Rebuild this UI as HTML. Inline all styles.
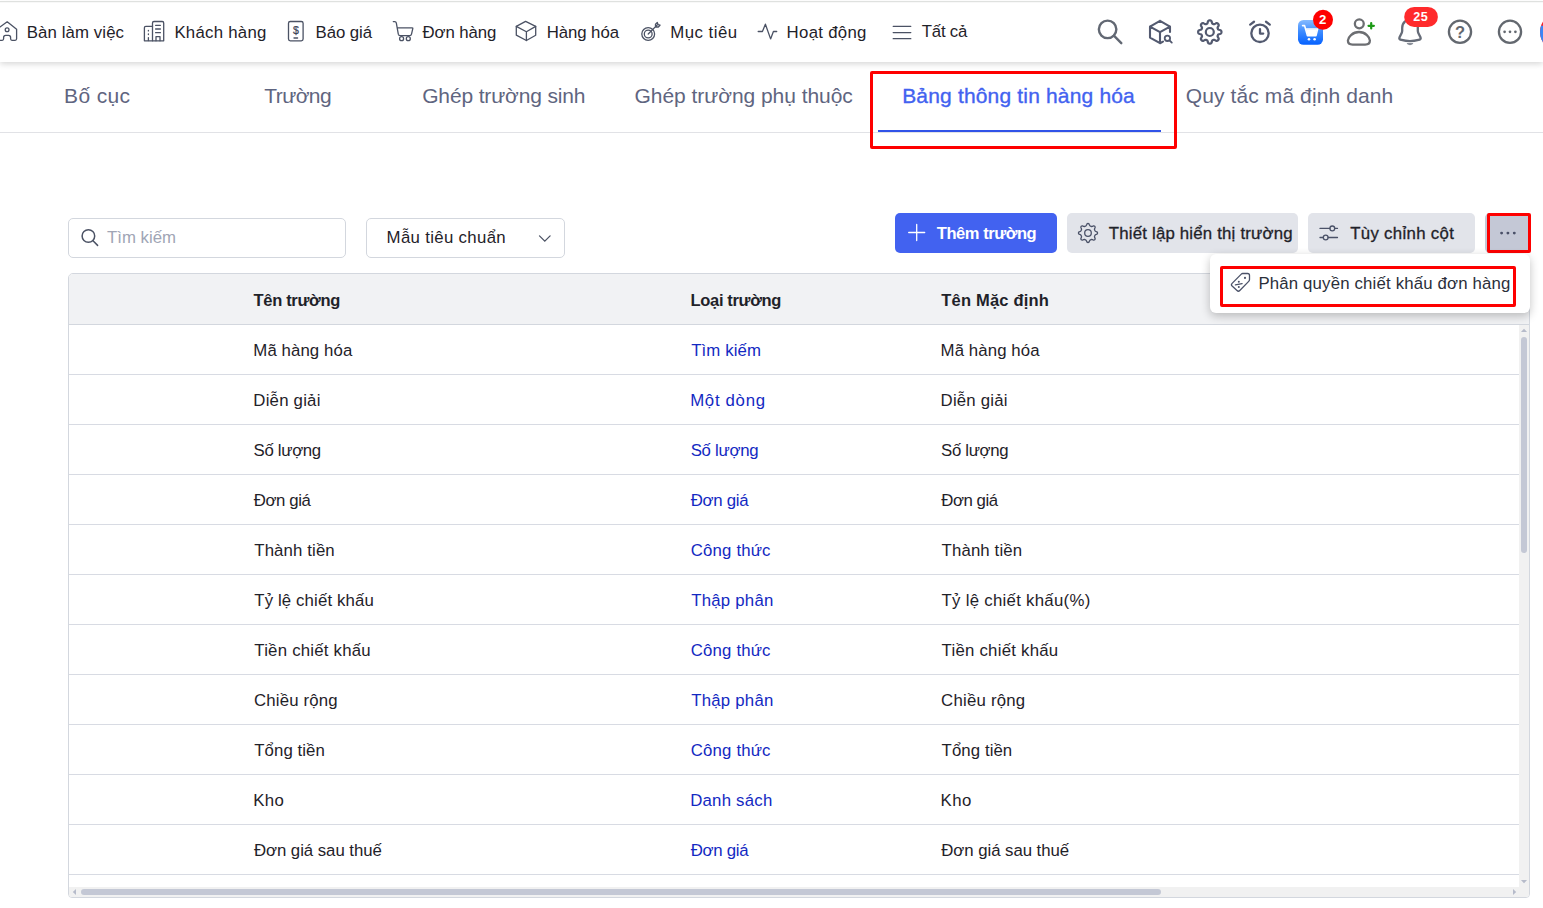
<!DOCTYPE html>
<html lang="vi">
<head>
<meta charset="utf-8">
<title>Bảng thông tin hàng hóa</title>
<style>
*{box-sizing:border-box;margin:0;padding:0}
html,body{width:1543px;height:908px;overflow:hidden;background:#fff}
body{font-family:"Liberation Sans",sans-serif;color:#1f2229;position:relative}
.abs{position:absolute;white-space:nowrap}
svg{display:block;overflow:visible}

/* top nav */
#topline{left:0;top:1px;width:1543px;height:1px;background:#dfe1df;box-shadow:0 1px 0 #f8f8f8}
#nav{left:0;top:3px;width:1543px;height:59px;background:#fff;box-shadow:0 2px 6px rgba(0,0,0,.16)}
.ni{top:23px;font-size:16.8px;line-height:20px;color:#1f2229}
.nic{stroke:#4b5264;fill:none;stroke-width:1.3;stroke-linecap:round;stroke-linejoin:round}
.ric{stroke:#565b66;fill:none;stroke-width:2.3;stroke-linecap:round;stroke-linejoin:round}

/* tabs */
#tabline{left:0;top:132px;width:1543px;height:1px;background:#e1e2e6}
.tab{top:84px;font-size:21px;line-height:24px;color:#5f6580}
.tab.act{color:#4262f0;-webkit-text-stroke:.35px #4262f0}
#tabul{left:878px;top:130px;width:283px;height:2px;background:#3053e8}
.red{border:3px solid #fe0000;background:transparent;border-radius:2px}

/* toolbar */
#search{left:68px;top:218px;width:278px;height:40px;border:1px solid #d3d7de;border-radius:5px;background:#fff}
#search span{position:absolute;top:9px;font-size:16.8px;line-height:20px;color:#a0a5b5}
#select{left:366px;top:218px;width:199px;height:40px;border:1px solid #d3d7de;border-radius:5px;background:#fff}
#select span{position:absolute;top:9px;font-size:16.8px;line-height:20px;color:#1f2229}
.btn{top:213px;height:40px;border-radius:5px;background:#e2e4ea;font-size:16.8px;line-height:20px;color:#1f2229}
.btn span{position:absolute;top:11px;white-space:nowrap;-webkit-text-stroke:.3px #1f2229}
#btnadd span{top:10px;-webkit-text-stroke:0}
#btnadd{left:895px;width:162px;background:#4262f0;color:#fff;font-weight:bold;font-size:16.5px}

/* table */
#tbl{left:68px;top:273px;width:1462px;height:625px;border:1px solid #d3d7de;border-radius:5px 5px 4px 4px;background:#fff;overflow:hidden}
#thead{left:0;top:0;width:1460px;height:51px;background:#f1f2f4;border-bottom:1px solid #d3d7de}
.th{top:16px;font-size:16.5px;line-height:20px;font-weight:bold;color:#1f2229}
.row{left:0;width:1450px;height:50px;border-bottom:1px solid #d8dbe3}
.row span{position:absolute;top:16px;font-size:16.8px;line-height:20px;white-space:nowrap}
.c1{color:#1f2229}
.c2{color:#1329c2}
.c3{color:#1f2229}
#vsb{left:1450px;top:51px;width:10px;height:562px;background:#f1f1f1}
#hsb{left:0;top:613px;width:1460px;height:10px;background:#f1f1f1}
.thumb{background:#c4c8d5;border-radius:3px}

/* popup */
#pop{left:1210px;top:254px;width:320px;height:59px;background:#fff;border-radius:6px;box-shadow:0 3px 10px rgba(0,0,0,.24)}
#pop span{position:absolute;top:20px;font-size:16.8px;line-height:20px;color:#2b2f3a}
</style>
</head>
<body>

<!-- ===== top navigation ===== -->
<div class="abs" id="nav"></div>
<div class="abs" id="topline"></div>

<div class="abs ni" id="n1" style="left:26.7px;letter-spacing:0.11px">Bàn làm việc</div>
<div class="abs ni" id="n2" style="left:174.4px;letter-spacing:0.26px">Khách hàng</div>
<div class="abs ni" id="n3" style="left:315.6px;letter-spacing:-0.07px">Báo giá</div>
<div class="abs ni" id="n4" style="left:422.6px;letter-spacing:-0.09px">Đơn hàng</div>
<div class="abs ni" id="n5" style="left:546.7px;letter-spacing:-0.07px">Hàng hóa</div>
<div class="abs ni" id="n6" style="left:670.2px;letter-spacing:0.50px">Mục tiêu</div>
<div class="abs ni" id="n7" style="left:786.6px;letter-spacing:0.30px">Hoạt động</div>
<div class="abs ni" id="n8" style="left:921.8px;letter-spacing:-0.21px;top:22px">Tất cả</div>

<!-- ===== tabs ===== -->
<div class="abs" id="tabline"></div>
<div class="abs tab" id="b1" style="left:64.1px;letter-spacing:0.35px">Bố cục</div>
<div class="abs tab" id="b2" style="left:264.3px;letter-spacing:-0.58px">Trường</div>
<div class="abs tab" id="b3" style="left:422.2px;letter-spacing:-0.15px">Ghép trường sinh</div>
<div class="abs tab" id="b4" style="left:634.5px;letter-spacing:-0.05px">Ghép trường phụ thuộc</div>
<div class="abs tab act" id="b5" style="left:902.2px;letter-spacing:0.17px">Bảng thông tin hàng hóa</div>
<div class="abs tab" id="b6" style="left:1185.8px;letter-spacing:0.10px">Quy tắc mã định danh</div>
<div class="abs" id="tabul"></div>
<div class="abs red" style="left:870px;top:71px;width:307px;height:78px"></div>

<!-- ===== toolbar ===== -->
<div class="abs" id="search"><span id="s1" style="left:38.0px;letter-spacing:0.01px">Tìm kiếm</span></div>
<div class="abs" id="select"><span id="s2" style="left:19.6px;letter-spacing:0.33px">Mẫu tiêu chuẩn</span></div>

<div class="abs btn" id="btnadd"><span id="s3" style="left:41.8px;letter-spacing:-0.45px">Thêm trường</span></div>
<div class="abs btn" style="left:1067px;width:231px"><span id="s4" style="left:41.8px;letter-spacing:0.20px">Thiết lập hiển thị trường</span></div>
<div class="abs btn" style="left:1308px;width:167px"><span id="s5" style="left:42.2px;letter-spacing:0.32px">Tùy chỉnh cột</span></div>
<div class="abs btn" style="left:1485px;width:45px;background:#c4c8d6"></div>
<div class="abs red" style="left:1487px;top:213px;width:44px;height:40px"></div>

<!-- ===== table ===== -->
<div class="abs" id="tbl">
  <div class="abs" id="thead"></div>
  <div class="abs th" id="h1" style="left:184.6px;letter-spacing:-0.33px">Tên trường</div>
  <div class="abs th" id="h2" style="left:621.6px;letter-spacing:-0.35px">Loại trường</div>
  <div class="abs th" id="h3" style="left:872.3px;letter-spacing:0.19px">Tên Mặc định</div>

  <div class="abs row" style="top:51px"><span class="c1" id="r1c1" style="left:184.3px;letter-spacing:0.10px">Mã hàng hóa</span><span class="c2" id="r1c2" style="left:622.2px;letter-spacing:0.12px">Tìm kiếm</span><span class="c3" id="r1c3" style="left:871.6px;letter-spacing:0.10px">Mã hàng hóa</span></div>
  <div class="abs row" style="top:101px"><span class="c1" id="r2c1" style="left:184.3px;letter-spacing:0.22px">Diễn giải</span><span class="c2" id="r2c2" style="left:621.2px;letter-spacing:0.69px">Một dòng</span><span class="c3" id="r2c3" style="left:871.6px;letter-spacing:0.20px">Diễn giải</span></div>
  <div class="abs row" style="top:151px"><span class="c1" id="r3c1" style="left:184.6px;letter-spacing:-0.32px">Số lượng</span><span class="c2" id="r3c2" style="left:621.7px;letter-spacing:-0.28px">Số lượng</span><span class="c3" id="r3c3" style="left:872.0px;letter-spacing:-0.31px">Số lượng</span></div>
  <div class="abs row" style="top:201px"><span class="c1" id="r4c1" style="left:184.8px;letter-spacing:-0.42px">Đơn giá</span><span class="c2" id="r4c2" style="left:621.7px;letter-spacing:-0.29px">Đơn giá</span><span class="c3" id="r4c3" style="left:872.2px;letter-spacing:-0.43px">Đơn giá</span></div>
  <div class="abs row" style="top:251px"><span class="c1" id="r5c1" style="left:185.3px;letter-spacing:0.12px">Thành tiền</span><span class="c2" id="r5c2" style="left:621.8px;letter-spacing:0.16px">Công thức</span><span class="c3" id="r5c3" style="left:872.6px;letter-spacing:0.13px">Thành tiền</span></div>
  <div class="abs row" style="top:301px"><span class="c1" id="r6c1" style="left:185.3px;letter-spacing:0.13px">Tỷ lệ chiết khấu</span><span class="c2" id="r6c2" style="left:622.2px;letter-spacing:0.23px">Thập phân</span><span class="c3" id="r6c3" style="left:872.6px;letter-spacing:0.28px">Tỷ lệ chiết khấu(%)</span></div>
  <div class="abs row" style="top:351px"><span class="c1" id="r7c1" style="left:185.3px;letter-spacing:0.23px">Tiền chiết khấu</span><span class="c2" id="r7c2" style="left:621.8px;letter-spacing:0.16px">Công thức</span><span class="c3" id="r7c3" style="left:872.6px;letter-spacing:0.24px">Tiền chiết khấu</span></div>
  <div class="abs row" style="top:401px"><span class="c1" id="r8c1" style="left:184.9px;letter-spacing:0.19px">Chiều rộng</span><span class="c2" id="r8c2" style="left:622.2px;letter-spacing:0.23px">Thập phân</span><span class="c3" id="r8c3" style="left:872.1px;letter-spacing:0.22px">Chiều rộng</span></div>
  <div class="abs row" style="top:451px"><span class="c1" id="r9c1" style="left:185.3px;letter-spacing:0.07px">Tổng tiền</span><span class="c2" id="r9c2" style="left:621.8px;letter-spacing:0.16px">Công thức</span><span class="c3" id="r9c3" style="left:872.6px;letter-spacing:0.08px">Tổng tiền</span></div>
  <div class="abs row" style="top:501px"><span class="c1" id="r10c1" style="left:184.3px;letter-spacing:0.34px">Kho</span><span class="c2" id="r10c2" style="left:621.2px;letter-spacing:0.23px">Danh sách</span><span class="c3" id="r10c3" style="left:871.6px;letter-spacing:0.40px">Kho</span></div>
  <div class="abs row" style="top:551px"><span class="c1" id="r11c1" style="left:184.9px;letter-spacing:-0.04px">Đơn giá sau thuế</span><span class="c2" id="r11c2" style="left:621.7px;letter-spacing:-0.29px">Đơn giá</span><span class="c3" id="r11c3" style="left:872.2px;letter-spacing:-0.04px">Đơn giá sau thuế</span></div>

  <div class="abs" id="vsb"></div>
  <div class="abs thumb" style="left:1452px;top:63px;width:6px;height:216px"></div>
  <div class="abs" id="hsb"></div>
  <div class="abs thumb" style="left:12px;top:615px;width:1080px;height:6px"></div>
</div>

<!-- ===== popup menu ===== -->
<div class="abs" id="pop"><span id="s6" style="left:48.4px;letter-spacing:0.17px">Phân quyền chiết khấu đơn hàng</span></div>
<div class="abs red" style="left:1220px;top:266px;width:296px;height:41px"></div>

<!-- ===== icon overlay ===== -->
<svg class="abs" style="left:0;top:0" width="1543" height="908" viewBox="0 0 1543 908">
<!-- home -->
<g class="nic">
<path d="M-3 40.3V29.2L7.2 21.8L16.6 29.2V38.8Q16.6 40.3 15.1 40.3H12Q10.6 40.3 10.6 38.8V37.6Q10.6 35.4 8.6 35.4H5.6Q3.6 35.4 3.6 37.6V38.8Q3.6 40.3 2.2 40.3Z"/>
<circle cx="7.1" cy="29.7" r="1.9"/>
<!-- building -->
<path d="M152.5 40.8V23Q152.5 21.5 154 21.5H162.2Q163.7 21.5 163.7 23V40.8Z"/>
<path d="M152.5 26.4H145.8Q144.4 26.4 144.4 27.8V40.8H152.5"/>
<path d="M155.6 25.3H160.4M155.6 29H160.4M155.6 32.7H160.4"/>
<path d="M156 40.8V36.6H160V40.8"/>
<path d="M148.4 30.3V30.9M148.4 34V34.6M148.4 37.6V40.6"/>
<!-- quote doc -->
<rect x="288.5" y="21.5" width="14.6" height="19.3" rx="1.8"/>
<path d="M294 38H297.6"/>
<!-- cart -->
<path d="M393.3 21.6H394.8Q396 21.6 396.3 22.9L398.3 34.2Q398.6 35.6 400 35.6H409.8Q411.2 35.6 411.5 34.2L412.8 28.6Q413 27.8 412 27.8H397.2"/>
<circle cx="401.6" cy="38.7" r="2"/><circle cx="408.3" cy="38.7" r="2"/>
<!-- box -->
<path d="M525.6 21.4L535.7 26.4V35.2L526.4 40.5L516.3 35.2V26.4Z"/>
<path d="M516.3 26.4L526.4 31.8L535.7 26.4M526.4 31.8V40.5"/>
<!-- target -->
<circle cx="648.2" cy="34" r="6.4"/><circle cx="648.2" cy="34" r="3.9"/>
<path d="M648.2 34L657.3 24.9M655.5 27V24.2L657.3 22.5L658 24.5L660 25.2L658.3 27Z"/>
<!-- pulse -->
<path d="M758.2 31.5H762.4L765.4 24.2L770.6 38.9L773.4 31.5H776.7"/>
<!-- hamburger -->
<path d="M893.2 26.3H910.8M893.2 32.6H910.8M893.2 38.7H910.8"/>
</g>
<text x="295.9" y="33.8" font-size="10.5" text-anchor="middle" fill="#3d4457" stroke="#3d4457" stroke-width=".25" font-family="Liberation Sans, sans-serif">$</text>
<!-- /NAVICONS -->

<!-- search -->
<g fill="none" stroke="#626873" stroke-width="2.4" stroke-linecap="round" stroke-linejoin="round">
<circle cx="1107.6" cy="29.35" r="8.75"/><path d="M1113.9 35.7L1121.3 43.2"/>
</g>
<g class="ric" style="stroke:#535a70">
<!-- box search -->
<path d="M1160 20.8L1170 26.6V32M1160 20.8L1150 26.6V37.6L1160 43.2L1163 41.6M1150 26.6L1160 32.2L1170 26.6M1160 32.2V43.2" stroke-width="2.1"/>
<circle cx="1167.4" cy="38.3" r="2.7" stroke-width="1.8"/><path d="M1169.6 40.5L1171.8 42.6" stroke-width="1.8"/>
<!-- gear -->
<path d="M1209.8 20.4L1210.3 20.4L1210.7 20.5L1211.1 20.7L1211.5 21.2L1211.8 22.0L1212.0 22.9L1212.2 23.4L1212.5 23.7L1212.8 23.9L1213.1 24.0L1213.4 24.1L1213.8 24.2L1214.2 24.2L1214.7 24.0L1215.4 23.6L1216.2 23.1L1216.9 23.1L1217.3 23.2L1217.7 23.5L1218.0 23.8L1218.3 24.1L1218.6 24.5L1218.7 24.9L1218.7 25.6L1218.2 26.4L1217.8 27.1L1217.6 27.6L1217.6 28.0L1217.7 28.4L1217.8 28.7L1217.9 29.0L1218.1 29.3L1218.4 29.6L1218.9 29.8L1219.8 30.0L1220.6 30.3L1221.1 30.7L1221.3 31.1L1221.4 31.5L1221.5 32.0L1221.4 32.5L1221.3 32.9L1221.1 33.3L1220.6 33.7L1219.8 34.0L1218.9 34.2L1218.4 34.4L1218.1 34.7L1217.9 35.0L1217.8 35.3L1217.7 35.6L1217.6 36.0L1217.6 36.4L1217.8 36.9L1218.2 37.6L1218.7 38.4L1218.7 39.1L1218.6 39.5L1218.3 39.9L1218.0 40.2L1217.7 40.5L1217.3 40.8L1216.9 40.9L1216.2 40.9L1215.4 40.4L1214.7 40.0L1214.2 39.8L1213.8 39.8L1213.4 39.9L1213.1 40.0L1212.8 40.1L1212.5 40.3L1212.2 40.6L1212.0 41.1L1211.8 42.0L1211.5 42.8L1211.1 43.3L1210.7 43.5L1210.3 43.6L1209.8 43.6L1209.3 43.6L1208.9 43.5L1208.5 43.3L1208.1 42.8L1207.8 42.0L1207.6 41.1L1207.4 40.6L1207.1 40.3L1206.8 40.1L1206.5 40.0L1206.2 39.9L1205.8 39.8L1205.4 39.8L1204.9 40.0L1204.2 40.4L1203.4 40.9L1202.7 40.9L1202.3 40.8L1201.9 40.5L1201.6 40.2L1201.3 39.9L1201.0 39.5L1200.9 39.1L1200.9 38.4L1201.4 37.6L1201.8 36.9L1202.0 36.4L1202.0 36.0L1201.9 35.6L1201.8 35.3L1201.7 35.0L1201.5 34.7L1201.2 34.4L1200.7 34.2L1199.8 34.0L1199.0 33.7L1198.5 33.3L1198.3 32.9L1198.2 32.5L1198.1 32.0L1198.2 31.5L1198.3 31.1L1198.5 30.7L1199.0 30.3L1199.8 30.0L1200.7 29.8L1201.2 29.6L1201.5 29.3L1201.7 29.0L1201.8 28.7L1201.9 28.4L1202.0 28.0L1202.0 27.6L1201.8 27.1L1201.4 26.4L1200.9 25.6L1200.9 24.9L1201.0 24.5L1201.3 24.1L1201.6 23.8L1201.9 23.5L1202.3 23.2L1202.7 23.1L1203.4 23.1L1204.2 23.6L1204.9 24.0L1205.4 24.2L1205.8 24.2L1206.2 24.1L1206.5 24.0L1206.8 23.9L1207.1 23.7L1207.4 23.4L1207.6 22.9L1207.8 22.0L1208.1 21.2L1208.5 20.7L1208.9 20.5L1209.3 20.4Z" stroke-width="2.2"/>
<circle cx="1209.8" cy="32" r="4" stroke-width="2.2"/>
<!-- alarm -->
<circle cx="1260" cy="33.3" r="8.7"/>
<path d="M1260 29.2V33.6H1263.2M1250.2 24.6L1254 21.8M1266 21.8L1269.8 24.6"/>
</g>
<!-- blue cart -->
<defs><linearGradient id="bg1" x1="0" y1="0" x2="0" y2="1"><stop offset="0" stop-color="#86bbff"/><stop offset=".45" stop-color="#3f8dff"/><stop offset="1" stop-color="#0561ff"/></linearGradient></defs>
<rect x="1298" y="20" width="25" height="24.8" rx="5.5" fill="url(#bg1)"/>
<path d="M1302.6 25.6H1304.6L1307.4 35.6H1316L1317.6 29H1305.6" fill="none" stroke="#fff" stroke-width="1.6" stroke-linecap="round" stroke-linejoin="round"/>
<path d="M1306 29.4H1317.2L1315.8 35.2H1307.6Z" fill="#fff"/>
<circle cx="1309" cy="39.2" r="1.3" fill="#fff"/><circle cx="1314.6" cy="39.2" r="1.3" fill="#fff"/>
<circle cx="1323" cy="19.7" r="10" fill="#fe0000"/>
<text x="1322.6" y="24" font-size="13.2" font-weight="bold" text-anchor="middle" fill="#fff" font-family="Liberation Sans, sans-serif">2</text>
<!-- user plus -->
<g fill="none" stroke="#6c6e72" stroke-width="2.3" stroke-linecap="round" stroke-linejoin="round">
<circle cx="1359.3" cy="23.85" r="4.45"/>
<path d="M1359 32C1352.5 32 1347.9 37.2 1347.9 40.6C1347.9 43.3 1350 44.65 1352.6 44.65H1365.2C1367.8 44.65 1369.9 43.3 1369.9 40.6C1369.9 37.2 1365.5 32 1359 32Z"/>
</g>
<g fill="none" stroke="#666c78" stroke-width="2.3" stroke-linecap="round" stroke-linejoin="round">
<!-- bell -->
<path d="M1405 21.5C1402.8 23.3 1402.2 25.5 1402.2 28V31C1402.2 34 1399.3 36.3 1399.3 38.2C1399.3 39.3 1400.2 39.6 1401.5 39.9C1406 41.1 1414 41.1 1418.5 39.9C1419.8 39.6 1420.7 39.3 1420.7 38.2C1420.7 36.3 1417.8 34 1417.8 31V27"/>
</g>
<path d="M1407.4 43.6Q1410 45.6 1412.6 43.6Z" fill="#8a8f99" stroke="#8a8f99" stroke-width="1.2" stroke-linejoin="round"/>
<g fill="none" stroke="#63686f" stroke-width="2.3">
<!-- help / more -->
<circle cx="1460" cy="31.8" r="11.1"/>
<circle cx="1510" cy="31.8" r="11.1"/>
</g>
<path d="M1371.2 23.1V28.5M1368.5 25.8H1373.9" stroke="#1c9a16" stroke-width="2.2" fill="none" stroke-linecap="round"/>
<rect x="1404.2" y="6.9" width="33.7" height="20" rx="10" fill="#ff2a2c"/>
<text x="1420.7" y="21.1" font-size="12.6" font-weight="bold" text-anchor="middle" fill="#fff" letter-spacing="0.4" font-family="Liberation Sans, sans-serif">25</text>
<text x="1460" y="38.2" font-size="16.5" font-weight="bold" text-anchor="middle" fill="#63686f" font-family="Liberation Sans, sans-serif">?</text>
<circle cx="1504.6" cy="31.8" r="1.35" fill="#63686f"/><circle cx="1510" cy="31.8" r="1.35" fill="#63686f"/><circle cx="1515.4" cy="31.8" r="1.35" fill="#63686f"/>
<!-- avatar -->
<clipPath id="avc"><rect x="1530" y="25.8" width="20" height="30"/></clipPath>
<circle cx="1559.2" cy="31.9" r="19.2" fill="#f3202a"/>
<circle cx="1559.2" cy="31.9" r="19.2" fill="#3b86f7" clip-path="url(#avc)"/>
<!-- search input icon -->
<g fill="none" stroke="#4b5264" stroke-width="1.500" stroke-linecap="round">
<circle cx="88.400" cy="236" r="6.300"/><path d="M93 240.800L97.600 245.400"/>
<!-- select chevron -->
<path d="M539.5 235.9L544.8 241.1L550.1 235.9" stroke-width="1.300"/>
</g>
<!-- plus -->
<path d="M916.700 224.500V240.500M908.700 232.500H924.700" stroke="#fff" stroke-width="1.300" fill="none" stroke-linecap="round"/>
<!-- small gear -->
<g fill="none" stroke="#4b5268" stroke-width="1.3" stroke-linejoin="round">
<path d="M1088.0 223.5L1088.3 223.5L1088.6 223.6L1088.9 223.8L1089.1 224.1L1089.3 224.6L1089.5 225.0L1089.7 225.4L1089.9 225.7L1090.1 225.9L1090.3 226.0L1090.5 226.1L1090.7 226.2L1090.9 226.3L1091.1 226.4L1091.3 226.5L1091.6 226.5L1091.8 226.5L1092.2 226.4L1092.6 226.3L1093.0 226.1L1093.5 225.9L1093.9 225.9L1094.2 226.0L1094.5 226.1L1094.7 226.3L1094.9 226.5L1095.0 226.8L1095.1 227.1L1095.1 227.5L1094.9 228.0L1094.7 228.4L1094.6 228.8L1094.5 229.2L1094.5 229.4L1094.5 229.7L1094.6 229.9L1094.7 230.1L1094.8 230.3L1094.9 230.5L1095.0 230.7L1095.1 230.9L1095.3 231.1L1095.6 231.3L1096.0 231.5L1096.4 231.7L1096.9 231.9L1097.2 232.1L1097.4 232.4L1097.5 232.7L1097.5 233.0L1097.5 233.3L1097.4 233.6L1097.2 233.9L1096.9 234.1L1096.4 234.3L1096.0 234.5L1095.6 234.7L1095.3 234.9L1095.1 235.1L1095.0 235.3L1094.9 235.5L1094.8 235.7L1094.7 235.9L1094.6 236.1L1094.5 236.3L1094.5 236.6L1094.5 236.8L1094.6 237.2L1094.7 237.6L1094.9 238.0L1095.1 238.5L1095.1 238.9L1095.0 239.2L1094.9 239.5L1094.7 239.7L1094.5 239.9L1094.2 240.0L1093.9 240.1L1093.5 240.1L1093.0 239.9L1092.6 239.7L1092.2 239.6L1091.8 239.5L1091.6 239.5L1091.3 239.5L1091.1 239.6L1090.9 239.7L1090.7 239.8L1090.5 239.9L1090.3 240.0L1090.1 240.1L1089.9 240.3L1089.7 240.6L1089.5 241.0L1089.3 241.4L1089.1 241.9L1088.9 242.2L1088.6 242.4L1088.3 242.5L1088.0 242.5L1087.7 242.5L1087.4 242.4L1087.1 242.2L1086.9 241.9L1086.7 241.4L1086.5 241.0L1086.3 240.6L1086.1 240.3L1085.9 240.1L1085.7 240.0L1085.5 239.9L1085.3 239.8L1085.1 239.7L1084.9 239.6L1084.7 239.5L1084.4 239.5L1084.2 239.5L1083.8 239.6L1083.4 239.7L1083.0 239.9L1082.5 240.1L1082.1 240.1L1081.8 240.0L1081.5 239.9L1081.3 239.7L1081.1 239.5L1081.0 239.2L1080.9 238.9L1080.9 238.5L1081.1 238.0L1081.3 237.6L1081.4 237.2L1081.5 236.8L1081.5 236.6L1081.5 236.3L1081.4 236.1L1081.3 235.9L1081.2 235.7L1081.1 235.5L1081.0 235.3L1080.9 235.1L1080.7 234.9L1080.4 234.7L1080.0 234.5L1079.6 234.3L1079.1 234.1L1078.8 233.9L1078.6 233.6L1078.5 233.3L1078.5 233.0L1078.5 232.7L1078.6 232.4L1078.8 232.1L1079.1 231.9L1079.6 231.7L1080.0 231.5L1080.4 231.3L1080.7 231.1L1080.9 230.9L1081.0 230.7L1081.1 230.5L1081.2 230.3L1081.3 230.1L1081.4 229.9L1081.5 229.7L1081.5 229.4L1081.5 229.2L1081.4 228.8L1081.3 228.4L1081.1 228.0L1080.9 227.5L1080.9 227.1L1081.0 226.8L1081.1 226.5L1081.3 226.3L1081.5 226.1L1081.8 226.0L1082.1 225.9L1082.5 225.9L1083.0 226.1L1083.4 226.3L1083.8 226.4L1084.2 226.5L1084.4 226.5L1084.7 226.5L1084.9 226.4L1085.1 226.3L1085.3 226.2L1085.5 226.1L1085.7 226.0L1085.9 225.9L1086.1 225.7L1086.3 225.4L1086.5 225.0L1086.7 224.6L1086.9 224.1L1087.1 223.8L1087.4 223.6L1087.7 223.5Z"/>
<circle cx="1088" cy="233" r="3.3"/>
<!-- sliders -->
<path d="M1320 228.400H1329.900M1334.700 228.400H1337.500M1320 237.500H1323.300M1328.100 237.500H1337.500" stroke-linecap="round" stroke-width="1.300"/>
<circle cx="1332.300" cy="228.400" r="2.400" stroke-width="1.300"/><circle cx="1325.700" cy="237.500" r="2.400" stroke-width="1.300"/>
</g>
<!-- tag icon -->
<g fill="none" stroke="#4b5268" stroke-width="1.3" stroke-linecap="round" stroke-linejoin="round">
<path d="M1242.6 273.5H1247.6Q1249.5 273.5 1249.5 275.4V279.6Q1249.5 280.6 1248.7 281.4L1239.8 290.5Q1238.4 291.9 1237 290.5L1232.1 286Q1230.7 284.7 1232.1 283.4L1241.3 274.1Q1241.9 273.5 1242.6 273.5Z"/>
<path d="M1235.4 284.9L1242.1 283.6"/>
</g>
<circle cx="1245" cy="277.9" r="1.05" fill="#4b5268"/><circle cx="1238.8" cy="281.7" r="1" fill="#4b5268"/><circle cx="1238.8" cy="287" r="1" fill="#4b5268"/>
<!-- scrollbar arrows -->
<g fill="#b6bbca">
<path d="M1524 328.8L1527.1 332H1520.9Z"/>
<path d="M1524 883.2L1527.1 880H1520.9Z"/>
<path d="M72.8 892L76 888.9V895.1Z"/>
<path d="M1516.2 892L1513 888.9V895.1Z"/>
</g>
<!-- dots -->
<circle cx="1501.6" cy="233.1" r="1.45" fill="#4a5068"/><circle cx="1507.9" cy="233.1" r="1.45" fill="#4a5068"/><circle cx="1514.3" cy="233.1" r="1.45" fill="#4a5068"/>
</svg>
</body>
</html>
